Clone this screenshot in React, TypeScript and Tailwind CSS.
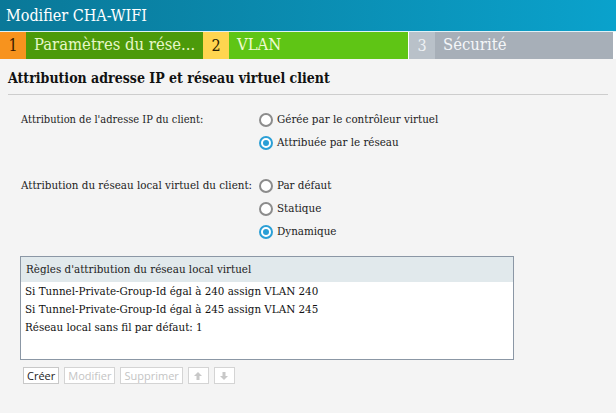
import { useState } from 'react';

interface RadioProps {
  label: string;
  checked: boolean;
  onSelect: () => void;
}

function Radio({ label, checked, onSelect }: RadioProps) {
  return (
    <label className="flex items-center h-[22px] cursor-pointer" onClick={onSelect}>
      <span
        className={`w-[14px] h-[14px] rounded-full border-2 flex items-center justify-center mr-[4px] bg-white ${
          checked ? 'border-[#2a9fd6]' : 'border-[#8c8c8c]'
        }`}
      >
        {checked && <span className="w-[6px] h-[6px] rounded-full bg-[#2a9fd6]" />}
      </span>
      <span className="text-[11.5px] text-[#222]">{label}</span>
    </label>
  );
}

interface StepProps {
  num: string;
  label: string;
  numBg: string;
  labelBg: string;
  numColor: string;
  labelColor: string;
  width: string;
}

function Step({ num, label, numBg, labelBg, numColor, labelColor, width }: StepProps) {
  return (
    <div className={`flex h-full ${width}`}>
      <div className={`w-[26px] flex items-center justify-center text-[16px] ${numBg} ${numColor}`}>{num}</div>
      <div className={`flex-1 flex items-center pl-[8px] text-[16.5px] ${labelBg} ${labelColor}`}>{label}</div>
    </div>
  );
}

export default function App() {
  const [ip, setIp] = useState(1);
  const [vlan, setVlan] = useState(2);
  const rules = [
    'Si Tunnel-Private-Group-Id égal à 240 assign VLAN 240',
    'Si Tunnel-Private-Group-Id égal à 245 assign VLAN 245',
    'Réseau local sans fil par défaut: 1',
  ];

  return (
    <div className="w-[616px] h-[413px] bg-[#f4f4f4] overflow-hidden font-['DejaVu_Serif_Condensed','Liberation_Serif',serif]">
      <div className="h-[31px] bg-gradient-to-r from-[#0a7898] to-[#0aa2cc] flex items-center pl-[6px] text-white text-[16px]">
        Modifier CHA-WIFI
      </div>
      <div className="h-[28px] flex border-t border-[#dff1f7] bg-white">
        <Step num="1" label="Paramètres du rése..." numBg="bg-[#f7931e]" labelBg="bg-[#4c9a0a]" numColor="text-[#3a1a00]" labelColor="text-[#e6f7c8]" width="w-[203px]" />
        <Step num="2" label="VLAN" numBg="bg-[#ffd54f]" labelBg="bg-[#5fc515]" numColor="text-[#2a2000]" labelColor="text-[#f0fbd0]" width="w-[206px] border-r border-white" />
        <Step num="3" label="Sécurité" numBg="bg-[#b9c1c9]" labelBg="bg-[#a7afb8]" numColor="text-[#eef1f4]" labelColor="text-[#f4f6f8]" width="w-[205px] border-r border-white" />
      </div>

      <div className="px-[8px] pt-[9px]">
        <h2 className="text-[14px] font-bold text-[#111] pb-[5px] border-b border-[#cdcdcd]">
          Attribution adresse IP et réseau virtuel client
        </h2>
      </div>

      <div className="pl-[21px] pt-[14px]">
        <div className="flex">
          <div className="w-[238px] h-[22px] flex items-center text-[11px] text-[#222] whitespace-nowrap">Attribution de l'adresse IP du client:</div>
          <div className="flex flex-col gap-px">
            <Radio label="Gérée par le contrôleur virtuel" checked={ip === 0} onSelect={() => setIp(0)} />
            <Radio label="Attribuée par le réseau" checked={ip === 1} onSelect={() => setIp(1)} />
          </div>
        </div>

        <div className="flex mt-[21px]">
          <div className="w-[238px] h-[22px] flex items-center text-[11.5px] text-[#222] whitespace-nowrap">Attribution du réseau local virtuel du client:</div>
          <div className="flex flex-col gap-px">
            <Radio label="Par défaut" checked={vlan === 0} onSelect={() => setVlan(0)} />
            <Radio label="Statique" checked={vlan === 1} onSelect={() => setVlan(1)} />
            <Radio label="Dynamique" checked={vlan === 2} onSelect={() => setVlan(2)} />
          </div>
        </div>
      </div>

      <div className="ml-[20px] mt-[13px] w-[494px] h-[104px] border border-[#8b97a5] bg-white">
        <div className="h-[25px] bg-[#e1e9ec] flex items-center pl-[5px] text-[11.5px] text-[#222]">
          Règles d'attribution du réseau local virtuel
        </div>
        <ul className="pt-[1px]">
          {rules.map((r) => (
            <li key={r} className="h-[18px] flex items-center pl-[4px] text-[11.5px] text-[#111]">{r}</li>
          ))}
        </ul>
      </div>

      <div className="flex gap-[5px] ml-[23px] mt-[7px] font-['Open_Sans','Noto_Sans',sans-serif]">
        <button className="h-[17px] px-[3px] bg-white border border-[#c8c8c8] text-[11px] text-[#222] leading-none">Créer</button>
        <button className="h-[17px] px-[3px] bg-white border border-[#d4d4d4] text-[11px] text-[#c4c4c4] leading-none">Modifier</button>
        <button className="h-[17px] px-[3px] bg-white border border-[#d4d4d4] text-[11px] text-[#c4c4c4] leading-none">Supprimer</button>
        <button className="h-[17px] w-[21px] bg-white border border-[#d4d4d4] flex items-center justify-center">
          <svg width="10" height="10" viewBox="0 0 10 10"><path d="M5 1 L9 5 H6.5 V9 H3.5 V5 H1 Z" fill="#c8c8c8" /></svg>
        </button>
        <button className="h-[17px] w-[21px] bg-white border border-[#d4d4d4] flex items-center justify-center">
          <svg width="10" height="10" viewBox="0 0 10 10"><path d="M5 9 L9 5 H6.5 V1 H3.5 V5 H1 Z" fill="#c8c8c8" /></svg>
        </button>
      </div>
    </div>
  );
}
